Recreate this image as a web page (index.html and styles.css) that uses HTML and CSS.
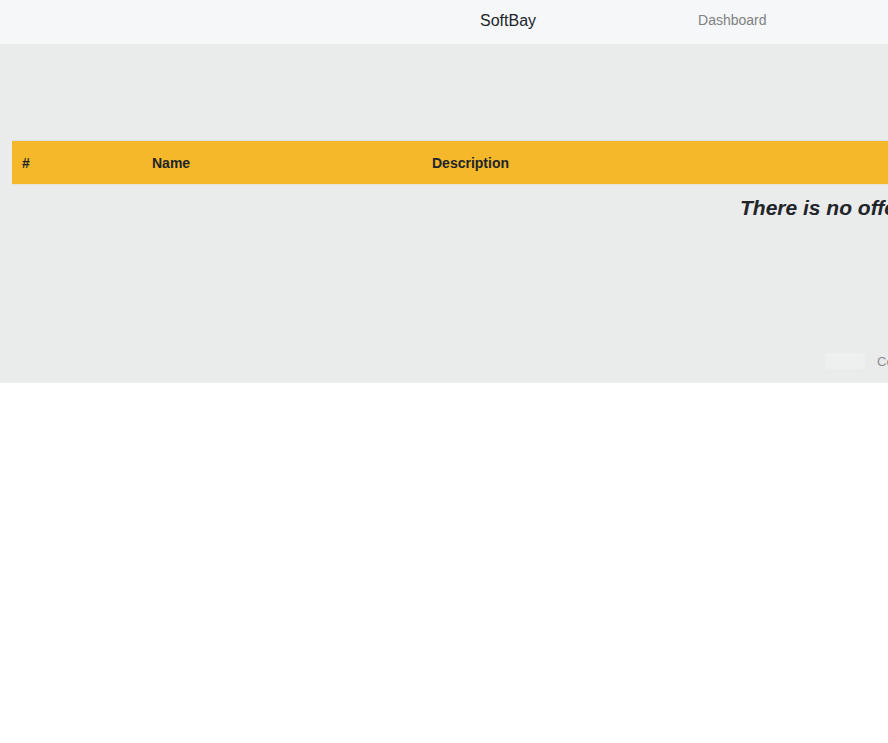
FILE: index.html
```html
<!DOCTYPE html>
<html>
<head>
<meta charset="utf-8">
<link rel="stylesheet" href="styles.css">
</head>
<body>
<header class="navbar">
  <a class="brand">SoftBay</a>
  <a class="nav-link">Dashboard</a>
</header>
<main class="main">
  <table class="offers">
    <thead>
      <tr>
        <th class="col-num">#</th>
        <th class="col-name">Name</th>
        <th class="col-desc">Description</th>
      </tr>
    </thead>
  </table>
  <h4 class="empty">There is no offers yet!</h4>
  <footer class="footer">
    <span class="footer-logo"></span>
    <span class="copy">Copyright &copy; SoftBay</span>
  </footer>
</main>
</body>
</html>
```
FILE: styles.css
```css
html, body {
  margin: 0;
  padding: 0;
  overflow: hidden;
}
body {
  font-family: "Liberation Sans", Arial, sans-serif;
  color: #212529;
  background: #ffffff;
  width: 1600px;
}
.navbar {
  height: 44px;
  background: #f6f7f9;
  display: flex;
  align-items: center;
}
.brand {
  margin-left: 480px;
  margin-bottom: 3px;
  font-size: 16px;
  color: #212529;
}
.nav-link {
  margin-left: 162px;
  margin-bottom: 4px;
  font-size: 14px;
  color: #808182;
}
.main {
  background: #eaebeb;
  height: 339px;
  padding: 96px 0 0 12px;
  box-sizing: border-box;
}
.offers {
  width: 1500px;
  border-collapse: collapse;
}
.offers th {
  background: #f5b82a;
  border-top: 1px solid #dee2e6;
  border-bottom: 1px solid #e8e4d8;
  height: 44px;
  padding: 0 10px;
  text-align: left;
  font-size: 14px;
  font-weight: bold;
  color: #212529;
  box-sizing: border-box;
}
.col-num { width: 130px; }
.col-name { width: 280px; }
.empty {
  margin: 9px 0 0 728px;
  font-size: 21px;
  font-style: italic;
  font-weight: bold;
  line-height: 28px;
}
.footer {
  display: flex;
  align-items: center;
  margin: 129px 0 0 813px;
  height: 20px;
}
.footer-logo {
  width: 40px;
  height: 16px;
  background: #eef0ef;
  border-radius: 3px;
}
.copy {
  margin-left: 12px;
  font-size: 13px;
  color: #8a8c8e;
}
```
